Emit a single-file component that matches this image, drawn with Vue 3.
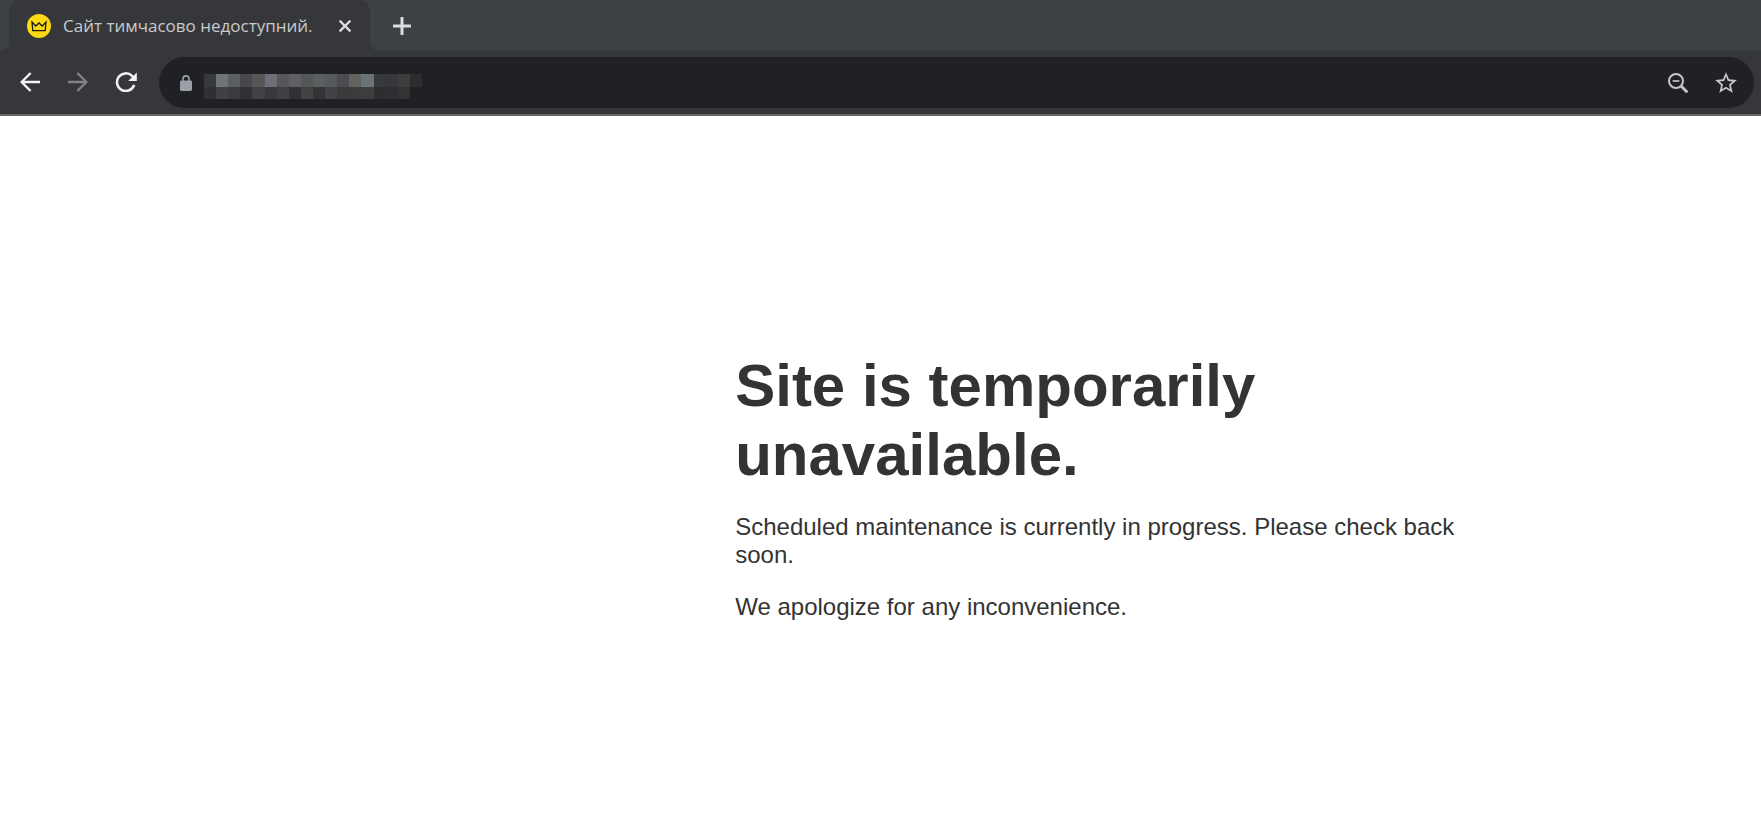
<template>
  <div class="browser">
    <header class="chrome">
      <div class="tab-strip">
        <div class="tab">
          <svg class="favicon" viewBox="0 0 24 24" aria-hidden="true">
            <circle cx="12" cy="12" r="12" fill="#fbd914" />
            <path d="M5 8 8.8 12 12 9 15.2 12 19 8 18.2 16.6H5.8Z" fill="none" stroke="#1c1a12" stroke-width="1.3" />
          </svg>
          <span class="tab-title">Сайт тимчасово недоступний.</span>
          <button class="icon-btn tab-close" aria-label="Close tab">
            <svg width="14" height="14" viewBox="0 0 14 14">
              <path d="M1.6 1.6 12.4 12.4M12.4 1.6 1.6 12.4" stroke="#dcdde0" stroke-width="2.2" />
            </svg>
          </button>
        </div>
        <button class="icon-btn new-tab" aria-label="New tab">
          <svg width="18" height="18" viewBox="0 0 18 18">
            <path d="M9 1V17M1 9H17" stroke="#dcdde0" stroke-width="3" stroke-linecap="round" />
          </svg>
        </button>
      </div>

      <div class="toolbar">
        <nav class="nav-buttons">
          <button class="icon-btn" aria-label="Back">
            <svg width="20" height="20" viewBox="0 0 20 20">
              <path d="M20 10H1.6M10.6 1 1.6 10 10.6 19" fill="none" stroke="#f3f4f5" stroke-width="2.4" />
            </svg>
          </button>
          <button class="icon-btn" aria-label="Forward" disabled>
            <svg width="20" height="20" viewBox="0 0 20 20">
              <path d="M0 10H18.4M9.4 1 18.4 10 9.4 19" fill="none" stroke="#828386" stroke-width="2.4" />
            </svg>
          </button>
          <button class="icon-btn" aria-label="Reload">
            <svg width="22" height="20" viewBox="0 0 22 20">
              <path d="M19.2 12.8A8.8 8.8 0 1 1 17 3.9L18.4 5.3" fill="none" stroke="#f3f4f5" stroke-width="2.5" />
              <path d="M21.8 0.4V9H13.2Z" fill="#f3f4f5" />
            </svg>
          </button>
        </nav>

        <div class="omnibox">
          <svg class="lock" width="12" height="16" viewBox="0 0 12 16" aria-hidden="true">
            <path d="M3 7V3.9a3 3 0 0 1 6 0V7" fill="none" stroke="#9aa0a6" stroke-width="1.6" />
            <rect y="5.6" width="12" height="10.4" rx="1.4" fill="#9aa0a6" />
          </svg>
          <div class="mosaic">
            <div v-for="(row, r) in mosaic" :key="r" class="mosaic-row">
              <span v-for="(color, c) in row" :key="c" class="mosaic-cell" :style="{ background: color }"></span>
            </div>
          </div>
          <input v-model="address" class="address" type="text" aria-label="Address" />
          <button class="icon-btn" aria-label="Zoom">
            <svg width="20" height="20" viewBox="0 0 20 20">
              <circle cx="8" cy="8" r="7" fill="none" stroke="#c4c6c9" stroke-width="2" />
              <path d="M4.6 8H11.4" stroke="#c4c6c9" stroke-width="1.7" />
              <path d="M12.8 12.8 19.4 19.4" stroke="#c4c6c9" stroke-width="2.8" />
            </svg>
          </button>
          <button class="icon-btn" aria-label="Bookmark this page">
            <svg width="26" height="26" viewBox="0 0 24 24">
              <path d="M22 9.24l-7.19-.62L12 2 9.19 8.63 2 9.24l5.46 4.73L5.82 21 12 17.27 18.18 21l-1.63-7.03L22 9.24zM12 15.4l-3.76 2.27 1-4.28-3.32-2.88 4.38-.38L12 6.1l1.71 4.04 4.38.38-3.32 2.88 1 4.28L12 15.4z" fill="#c4c6c9" />
            </svg>
          </button>
        </div>
      </div>
    </header>

    <main class="page">
      <div class="message">
        <h1>Site is temporarily unavailable.</h1>
        <p>Scheduled maintenance is currently in progress. Please check back soon.</p>
        <p>We apologize for any inconvenience.</p>
      </div>
    </main>
  </div>
</template>

<script setup>
import { ref } from 'vue';

const address = ref('');

// the address is pixelated, two rows of blocks
const mosaic = [
  ['#38393c', '#70737a', '#5c5e60', '#474849', '#555658', '#706d78', '#55575b', '#5f6062', '#555658',
    '#5b5f5f', '#58595c', '#4b4c4f', '#62635f', '#6c7375', '#37383b', '#36373b', '#3e3d3d', '#2d2d30'],
  ['#2f3033', '#404145', '#3b3c3f', '#303134', '#424246', '#39393d', '#3e4044', '#303134', '#424245',
    '#333534', '#414246', '#383a3c', '#3a3b3b', '#3d3f3f', '#2d2e30', '#2e2f32', '#333333'],
];
</script>

<style>
body {
  margin: 0;
  background: #fff;
}
</style>

<style scoped>
.browser {
  min-height: 100vh;
  display: flex;
  flex-direction: column;
  font-family: "Liberation Sans", Arial, sans-serif;
}
.chrome {
  background: #36373b;
  border-bottom: 2px solid #666467;
}
.icon-btn {
  display: flex;
  flex-shrink: 0;
  align-items: center;
  justify-content: center;
  width: 48px;
  height: 48px;
  padding: 0;
  border: none;
  background: none;
  cursor: pointer;
}
.tab-strip {
  display: flex;
  align-items: center;
  height: 51px;
  padding-left: 9px;
  background: #3d4144;
}
.tab {
  position: relative;
  display: flex;
  align-items: center;
  box-sizing: border-box;
  width: 361px;
  height: 51px;
  padding-left: 18px;
  border-radius: 10px 10px 0 0;
  background: #36373b;
}
/* curved feet of the active tab */
.tab::before,
.tab::after {
  content: "";
  position: absolute;
  bottom: 0;
  width: 10px;
  height: 10px;
}
.tab::before {
  right: 100%;
  background: radial-gradient(circle at 0 0, transparent 10px, #36373b 10px);
}
.tab::after {
  left: 100%;
  background: radial-gradient(circle at 100% 0, transparent 10px, #36373b 10px);
}
.favicon {
  flex-shrink: 0;
  width: 24px;
  height: 24px;
  margin-right: 12px;
}
.tab-title {
  flex: 1;
  white-space: nowrap;
  font-family: "Open Sans", "Noto Sans", sans-serif;
  font-size: 17px;
  line-height: 24px;
  color: #c9cacc;
}
.tab-close {
  margin-right: 1px;
}
.new-tab {
  width: 64px;
}
.toolbar {
  display: flex;
  align-items: center;
  padding: 6px 7px 6px 6px;
}
.nav-buttons {
  display: flex;
  margin-right: 9px;
  padding-bottom: 2px;
}
.omnibox {
  flex: 1;
  display: flex;
  align-items: center;
  box-sizing: border-box;
  height: 51px;
  padding: 0 4px 0 21px;
  border-radius: 26px;
  background: #202124;
}
.lock {
  margin-right: 12px;
}
.mosaic {
  width: 218px;
  margin-top: 8px;
}
.mosaic-row {
  display: grid;
  grid-template-columns: repeat(18, 1fr);
}
.mosaic-cell {
  height: 13px;
}
.mosaic-row + .mosaic-row .mosaic-cell {
  height: 12px;
}
.address {
  flex: 1;
  min-width: 0;
  padding: 0 12px;
  border: none;
  outline: none;
  background: none;
  font-size: 18px;
  color: #e8eaed;
}
.page {
  flex: 1;
  padding: 235px 0 48px;
  background: #fff;
}
.message {
  max-width: 768px;
  margin-left: 41.75%;
  color: #333;
}
.message h1 {
  margin: 0 0 24px;
  font-size: 60px;
  line-height: 69px;
}
.message p {
  margin: 0 0 24px;
  font-size: 24px;
  line-height: 28px;
}
</style>
